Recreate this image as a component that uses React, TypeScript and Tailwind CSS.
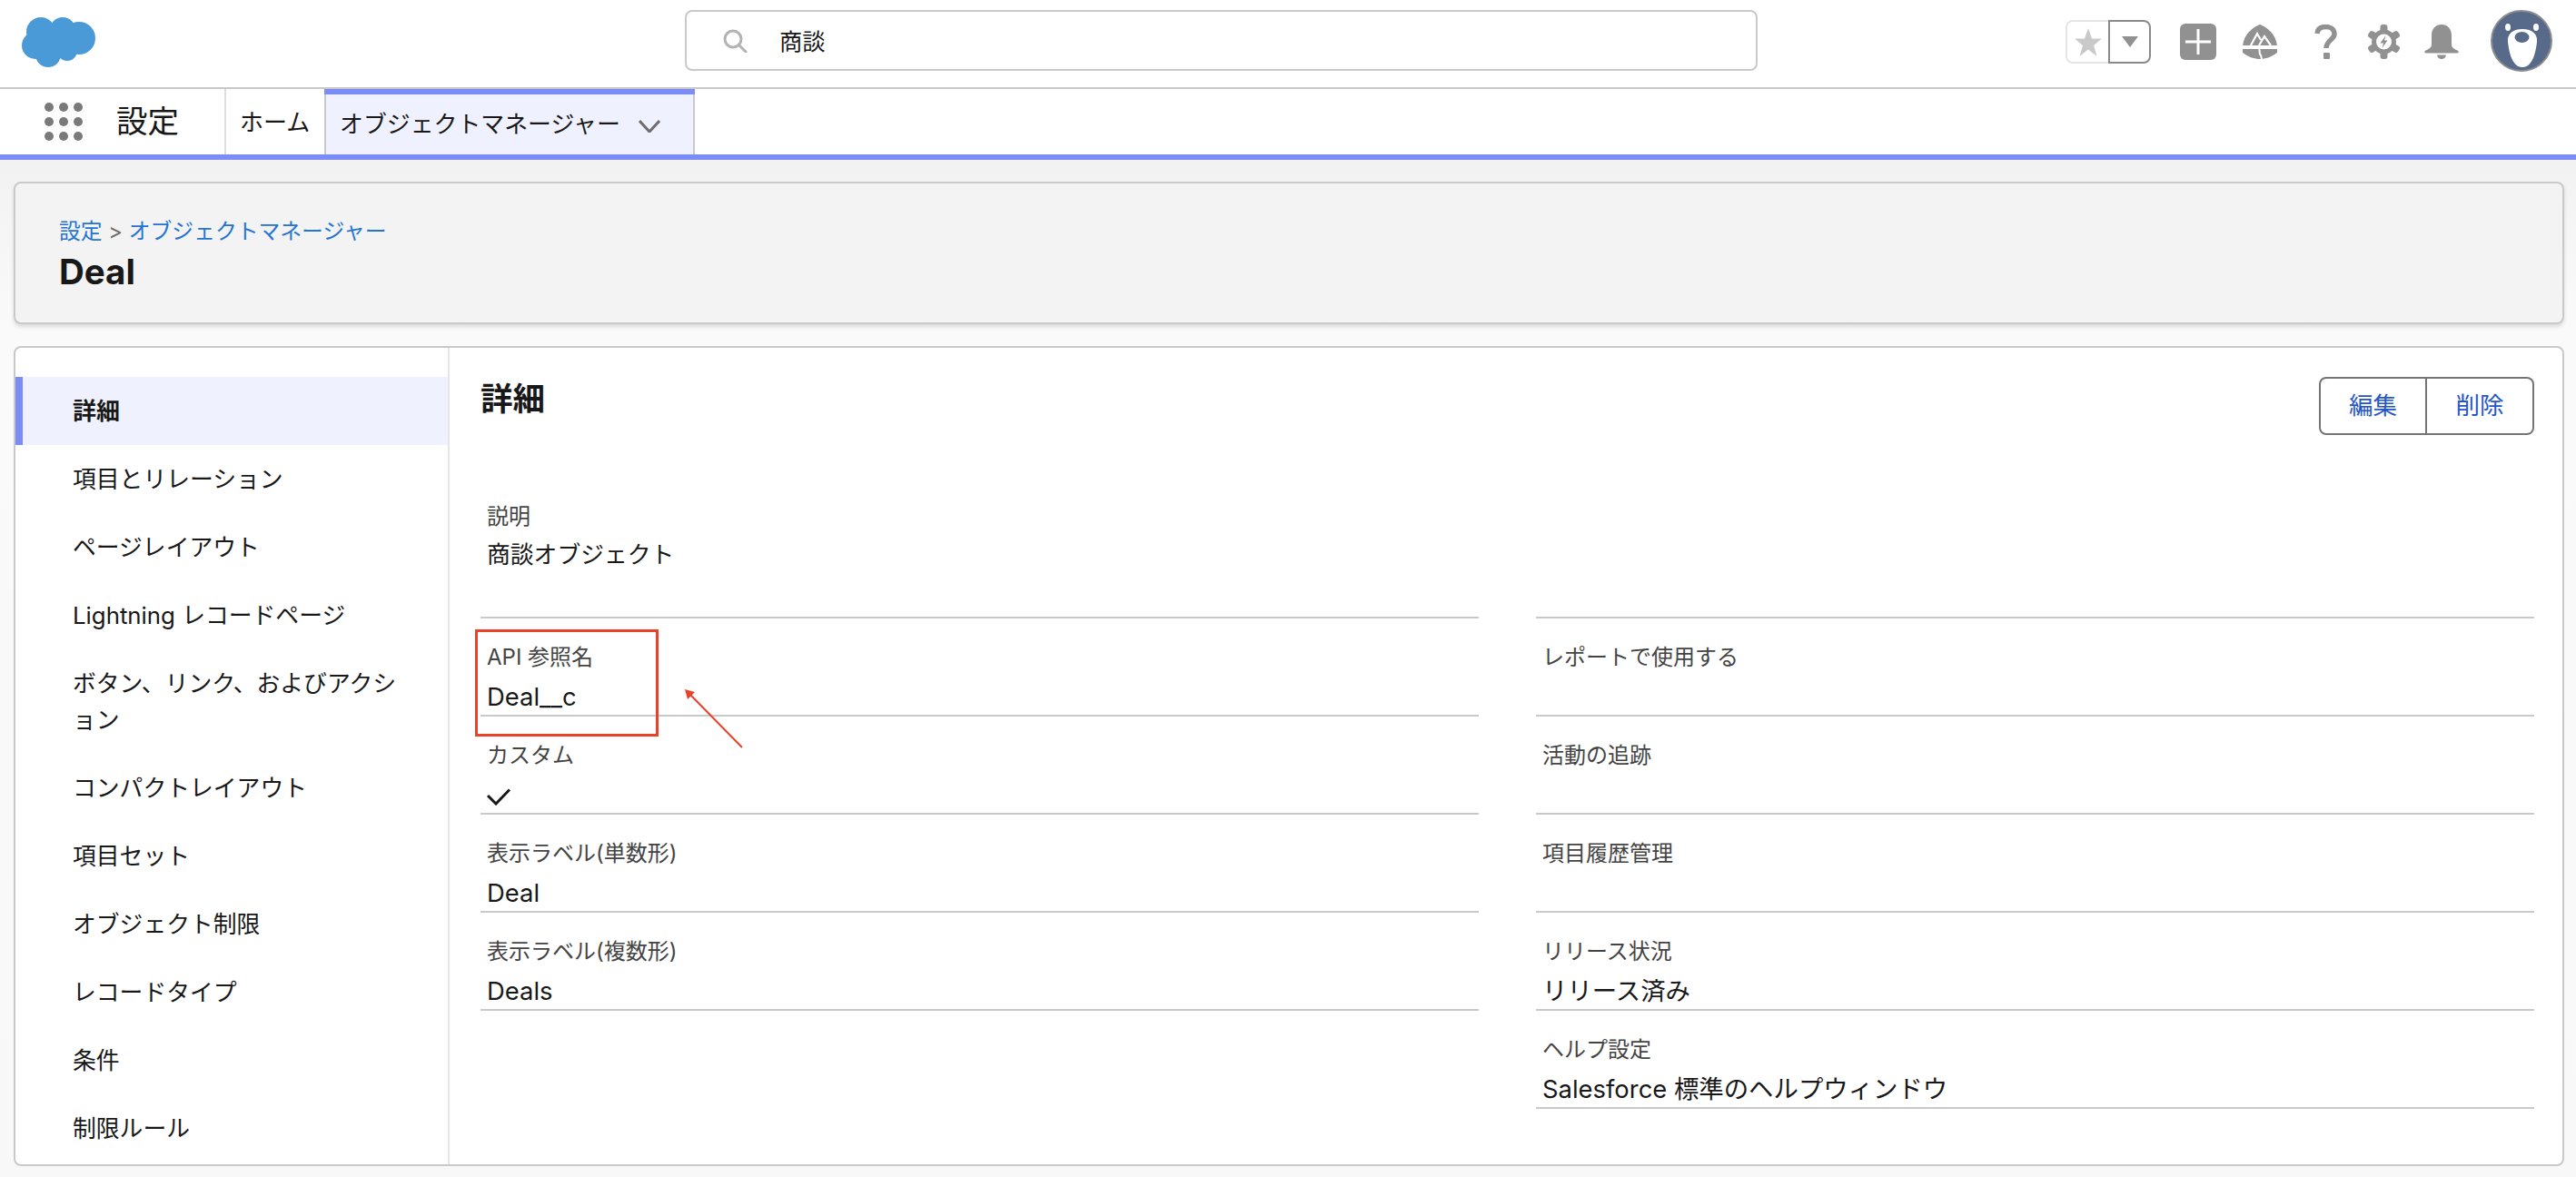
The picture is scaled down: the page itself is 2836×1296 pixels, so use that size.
import { Fragment } from "react";

const sideItems = [
  "項目とリレーション",
  "ページレイアウト",
  "Lightning レコードページ",
  "ボタン、リンク、およびアクション",
  "コンパクトレイアウト",
  "項目セット",
  "オブジェクト制限",
  "レコードタイプ",
  "条件",
  "制限ルール",
];

function Cloud() {
  return (
    <svg width="81" height="56" viewBox="0 0 81 56" fill="#4a9ad8">
      <circle cx="21" cy="17" r="16" />
      <circle cx="45" cy="15" r="14" />
      <circle cx="63" cy="24" r="18" />
      <circle cx="15" cy="32" r="15" />
      <circle cx="29" cy="42" r="14" />
      <circle cx="50" cy="38" r="11" />
      <rect x="18" y="14" width="40" height="28" />
    </svg>
  );
}

function Field({ label, value }: { label?: string; value?: React.ReactNode }) {
  return (
    <div className="h-[108px] border-b-2 border-[#c9c9c9] pl-[7px] pt-[28px]">
      <div className="h-[30px] text-[24px] leading-[30px] text-[#444444]">{label}</div>
      <div className="mt-[10px] h-[36px] text-[27.4px] leading-[36px] text-[#181818]">{value}</div>
    </div>
  );
}

export default function App() {
  return (
    <div className="relative h-[1296px] w-[2836px] overflow-hidden bg-[linear-gradient(#f2f2f2_176px,#fafafa_360px,#f8f8f8_1296px)] font-[family-name:Inter,'Noto_Sans_CJK_JP',sans-serif] text-[#181818]">
      {/* Global header */}
      <header className="flex h-[98px] items-center border-b-2 border-[#c9c9c9] bg-white pb-[4px]">
        <div className="ml-[24px] flex">
          <Cloud />
        </div>
        <div className="ml-[649px] mt-[-3px] flex h-[67px] w-[1181px] items-center rounded-lg border-2 border-[#c9c9c9] pl-[39px]">
          <svg width="28" height="26" viewBox="0 0 28 26" fill="none" stroke="#b3b3b3" strokeWidth="3">
            <circle cx="12" cy="11" r="9" />
            <path d="M18.5 17.5L26 25" strokeLinecap="round" />
          </svg>
          <span className="ml-[35px] mt-[2px] text-[25.3px]">商談</span>
        </div>
        <div className="ml-[339px] flex h-[48px] w-[94px]">
          <div className="flex w-[47px] items-center justify-center rounded-l-lg border-2 border-r-0 border-[#e5e5e5]">
            <svg width="30" height="31" viewBox="0 0 30 31" fill="#c9c9c9">
              <path d="M15 0L19 11.5H30L21 19L24.5 31L15 23.5L5.5 31L9 19L0 11.5H11Z" />
            </svg>
          </div>
          <div className="flex w-[47px] items-center justify-center rounded-r-lg border-2 border-[#8a8a8a]">
            <svg width="18" height="12" viewBox="0 0 18 12" fill="#919191">
              <path d="M0 0H18L9 12Z" />
            </svg>
          </div>
        </div>
        <div className="ml-[32px] flex h-[40px] w-[40px] items-center justify-center rounded-md bg-[#919191]">
          <svg width="28" height="28" viewBox="0 0 28 28" fill="white">
            <rect x="12.5" y="0" width="3" height="28" />
            <rect x="0" y="12.5" width="28" height="3" />
          </svg>
        </div>
        <svg className="ml-[29px]" width="38" height="38" viewBox="0 0 38 38">
          <path d="M19 0C27 3 36 10 38 23H0C2 10 11 3 19 0Z" fill="#919191" />
          <path d="M0 27H38V31C31 36 25 38 19 38C13 38 7 36 0 31Z" fill="#919191" />
          <path d="M9 23L16 10L20 17M18 23L24 13L31 23" stroke="white" strokeWidth="2.2" fill="none" />
          <path d="M18 27C20 30 17 31 20 34L21 38" stroke="white" strokeWidth="2" fill="none" />
        </svg>
        <svg className="ml-[41px]" width="25" height="38" viewBox="0 0 25 38" fill="none">
          <path d="M3 10C3.5 5 7 2.5 12.5 2.5C18.5 2.5 22 6 22 10.5C22 16.5 13 17.5 13 26" stroke="#919191" strokeWidth="5.5" />
          <rect x="10" y="31" width="7" height="7" rx="1" fill="#919191" />
        </svg>
        <svg className="ml-[34px]" width="35" height="38" viewBox="0 0 35 38">
          <g fill="#919191">
            <circle cx="17.5" cy="19" r="13.5" />
            <rect x="13.5" y="0" width="8" height="38" rx="3" />
            <rect x="13.5" y="0" width="8" height="38" rx="3" transform="rotate(60 17.5 19)" />
            <rect x="13.5" y="0" width="8" height="38" rx="3" transform="rotate(120 17.5 19)" />
          </g>
          <circle cx="17.5" cy="19" r="8.5" fill="white" />
          <path d="M19.5 12L13.5 20.5H17L15.5 26L21.5 17.5H18Z" fill="#919191" />
        </svg>
        <svg className="ml-[27px]" width="38" height="38" viewBox="0 0 38 38" fill="#919191">
          <path d="M19 0C26 0 30 5 30 12V22C30 26 34 27 37 29C38.5 30 38 31.5 36 31.5H2C0 31.5 -0.5 30 1 29C4 27 8 26 8 22V12C8 5 12 0 19 0Z" />
          <path d="M14 33.5H24C23.5 36.5 21.5 38 19 38C16.5 38 14.5 36.5 14 33.5Z" />
        </svg>
        <div className="ml-[35px] mt-[-2px] flex">
          <svg width="68" height="68" viewBox="0 0 68 68">
            <circle cx="34" cy="34" r="33" fill="#586a8a" stroke="#8c8c8c" strokeWidth="2" />
            <ellipse cx="19" cy="19" rx="3" ry="4" fill="white" />
            <ellipse cx="50" cy="19" rx="3" ry="4" fill="white" />
            <path d="M35 21C46 21 52 27 51 35C50 44 47 63 35 63C23 63 20 44 19 35C18 27 24 21 35 21Z" fill="white" />
            <ellipse cx="34.5" cy="30" rx="8" ry="6" fill="#586a8a" />
          </svg>
        </div>
      </header>

      {/* App nav */}
      <nav className="flex h-[78px] border-b-[6px] border-[#7b8cf5] bg-white">
        <div className="flex w-[249px] items-center border-r-2 border-[#dddddd] pl-[49px]">
          <div className="grid grid-cols-3 gap-[6px]">
            {Array.from({ length: 9 }).map((_, i) => (
              <div key={i} className="h-[10px] w-[10px] rounded-full bg-[#7a7a7a]" />
            ))}
          </div>
          <span className="ml-[37px] text-[34.5px]">設定</span>
        </div>
        <div className="flex w-[108px] items-center pl-[15px] text-[26px]">ホーム</div>
        <div className="flex w-[408px] flex-col border-x-2 border-[#c9c9c9] bg-[#eff2fe]">
          <div className="mx-[-2px] h-[6px] bg-[#7b8cf5]" />
          <div className="flex flex-1 items-center pl-[15px] text-[25.9px]">
            オブジェクトマネージャー
            <svg className="ml-[20px] mt-[4px]" width="24" height="14" viewBox="0 0 24 14" fill="none" stroke="#706e6b" strokeWidth="3">
              <path d="M1 1L12 13L23 1" />
            </svg>
          </div>
        </div>
      </nav>

      {/* Page title card */}
      <section className="ml-[15px] mt-[24px] h-[157px] w-[2808px] rounded-lg border-2 border-[#c9c9c9] bg-[#f3f3f3] pl-[48px] pt-[37px] shadow-[0_3px_4px_rgba(0,0,0,0.12)]">
        <div className="text-[23.8px] leading-[32px] text-[#2574d4]">
          設定 <span className="text-[#706e6b]">&gt;</span> オブジェクトマネージャー
        </div>
        <h1 className="mt-[3px] text-[38.5px] font-bold leading-[50px]">Deal</h1>
      </section>

      {/* Detail card */}
      <main className="ml-[15px] mt-[24px] flex h-[903px] w-[2808px] overflow-hidden rounded-lg border-2 border-[#c9c9c9] bg-white">
        <aside className="w-[478px] shrink-0 border-r-2 border-[#e5e5e5] pt-[32px]">
          <div className="flex h-[75px] items-center border-l-8 border-[#7b8cf5] bg-[#eff2fe] pl-[55px] text-[26px] font-bold">詳細</div>
          {sideItems.map((item) => (
            <div key={item} className="py-[17.5px] pl-[63px] text-[25.8px] leading-[40px]">
              {item === "ボタン、リンク、およびアクション" ? (
                <Fragment>
                  ボタン、リンク、およびアクシ
                  <br />
                  ョン
                </Fragment>
              ) : (
                item
              )}
            </div>
          ))}
        </aside>
        <div className="flex-1 pl-[34px] pr-[31px] pt-[32px]">
          <div className="flex h-[64px] items-start justify-between">
            <h2 className="text-[35.5px] font-bold leading-[50px]">詳細</h2>
            <div className="flex h-[64px] text-[26.5px] text-[#2556c8]">
              <button className="w-[119px] rounded-l-lg border-2 border-[#747474]">編集</button>
              <button className="w-[118px] rounded-r-lg border-2 border-l-0 border-[#747474]">削除</button>
            </div>
          </div>
          <div className="mt-[49px] grid grid-cols-2 gap-x-[63px]">
            <div className="h-[153px] border-b-2 border-[#c9c9c9] pl-[7px] pt-[26px]">
              <div className="h-[30px] text-[24px] leading-[30px] text-[#444444]">説明</div>
              <div className="mt-[9px] text-[25.8px] leading-[36px]">商談オブジェクト</div>
            </div>
            <div className="h-[153px] border-b-2 border-[#c9c9c9]" />
            <Field label="API 参照名" value="Deal__c" />
            <Field label="レポートで使用する" />
            <Field
              label="カスタム"
              value={
                <svg className="mt-[21px]" width="26" height="19" viewBox="0 0 26 19" fill="none" stroke="#181818" strokeWidth="3">
                  <path d="M1 8L10 17L25 1.5" />
                </svg>
              }
            />
            <Field label="活動の追跡" />
            <Field label="表示ラベル(単数形)" value="Deal" />
            <Field label="項目履歴管理" />
            <Field label="表示ラベル(複数形)" value="Deals" />
            <Field label="リリース状況" value="リリース済み" />
            <div />
            <Field label="ヘルプ設定" value="Salesforce 標準のヘルプウィンドウ" />
          </div>
        </div>
      </main>

      {/* Annotation drawn on the screenshot */}
      <div className="absolute left-[523px] top-[693px] h-[118px] w-[202px] border-[3px] border-[#e8432a]" />
      <svg className="absolute left-[750px] top-[755px]" width="72" height="72" viewBox="0 0 72 72" fill="none">
        <path d="M67 68L10 10" stroke="#e8432a" strokeWidth="2" />
        <path d="M4 4L15 7L7 15Z" fill="#e8432a" />
      </svg>
    </div>
  );
}
